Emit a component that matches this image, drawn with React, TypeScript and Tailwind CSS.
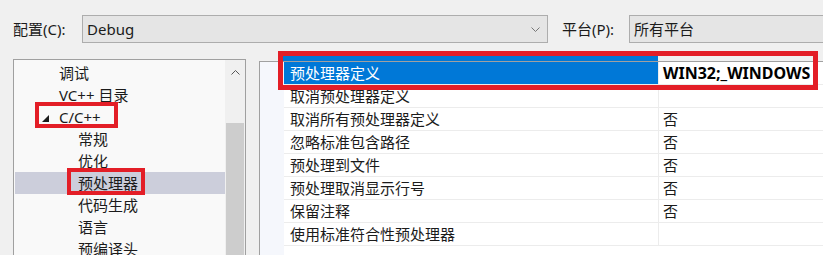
import React from "react";

const treeItems = [
  { label: "调试", level: 1 },
  { label: "VC++ 目录", level: 1 },
  { label: "C/C++", level: 1, expanded: true },
  { label: "常规", level: 2 },
  { label: "优化", level: 2 },
  { label: "预处理器", level: 2, selected: true },
  { label: "代码生成", level: 2 },
  { label: "语言", level: 2 },
  { label: "预编译头", level: 2 },
];

const props = [
  { name: "预处理器定义", value: "WIN32;_WINDOWS", selected: true },
  { name: "取消预处理器定义", value: "" },
  { name: "取消所有预处理器定义", value: "否" },
  { name: "忽略标准包含路径", value: "否" },
  { name: "预处理到文件", value: "否" },
  { name: "预处理取消显示行号", value: "否" },
  { name: "保留注释", value: "否" },
  { name: "使用标准符合性预处理器", value: "" },
];

function Chevron({ up }: { up?: boolean }) {
  return (
    <svg width="9" height="5" viewBox="0 0 9 5" className="block">
      <path
        d={up ? "M0.5 4.5 L4.5 0.5 L8.5 4.5" : "M0.5 0.5 L4.5 4.5 L8.5 0.5"}
        fill="none"
        stroke={up ? "#555" : "#777"}
        strokeWidth="1"
      />
    </svg>
  );
}

export default function App() {
  return (
    <div className="relative w-[823px] h-[255px] overflow-hidden bg-[#f0f0f0] text-[15px] text-[#1b1b1b] font-['Noto_Sans','Noto_Sans_CJK_SC',sans-serif]">
      {/* config / platform bar */}
      <div className="flex items-center pt-[15px]">
        <span className="ml-[13px] w-[69px] leading-[28px]">配置(C):</span>
        <div className="flex items-center w-[466px] h-[28px] border border-[#adadad] bg-[#e5e5e5] pl-[4px] pr-[7px]">
          <span className="flex-1 leading-[26px]">Debug</span>
          <Chevron />
        </div>
        <span className="ml-[14px] w-[67px] leading-[28px]">平台(P):</span>
        <div className="flex items-center flex-1 h-[28px] border border-r-0 border-[#adadad] bg-[#e5e5e5] pl-[4px]">
          <span className="leading-[26px]">所有平台</span>
        </div>
      </div>

      <div className="flex mt-[16px]">
        {/* tree */}
        <div className="ml-[13px] w-[233px] h-[200px] flex border border-[#a0a0a0] border-b-0 bg-[#f9f9f9]">
          <div className="flex-1 pt-[2px] pl-[1px]">
            {treeItems.map((it) => (
              <div
                key={it.label}
                className={
                  "relative h-[22px] leading-[22px] whitespace-nowrap " +
                  (it.selected ? "bg-[#cccedb] " : "") +
                  (it.level === 1 ? "pl-[44px]" : "pl-[63px]")
                }
              >
                {it.expanded && (
                  <svg width="7" height="7" viewBox="0 0 7 7" className="absolute left-[27px] top-[9px]">
                    <polygon points="7,0 7,7 0,7" fill="#1b1b1b" />
                  </svg>
                )}
                {it.label}
              </div>
            ))}
          </div>
          <div className="w-[20px] flex flex-col bg-[#f0f0f0]">
            <div className="h-[63px] flex justify-center pt-[10px]">
              <Chevron up />
            </div>
            <div className="flex-1 mx-[1px] bg-[#cdcdcd]" />
          </div>
        </div>

        {/* property grid */}
        <div className="ml-[13px] mt-[2px] flex-1 h-[200px] flex border-l border-t border-[#a0a0a0] bg-white">
          <div className="w-[24px] bg-[#f5f7fc]" />
          <div className="flex-1">
            {props.map((p) => (
              <div key={p.name} className="flex h-[23px] border-b border-[#ececec]">
                <div
                  className={
                    "w-[375px] pl-[6px] leading-[22px] whitespace-nowrap border-r border-[#ececec] " +
                    (p.selected ? "bg-[#0078d7] text-white" : "")
                  }
                >
                  {p.name}
                </div>
                <div
                  className={
                    "flex-1 pl-[4px] leading-[22px] whitespace-nowrap " +
                    (p.selected ? "font-bold text-black text-[16px]" : "")
                  }
                >
                  {p.value}
                </div>
              </div>
            ))}
          </div>
        </div>
      </div>

      {/* red annotation boxes */}
      <div className="absolute left-[278px] top-[51px] w-[540px] h-[39px] border-[5px] border-[#e31e27]">
        <div className="w-[375px] h-[5px] bg-[#0078d7]" />
      </div>
      <div className="absolute left-[35px] top-[102px] w-[83px] h-[26px] border-[4px] border-[#e31e27]" />
      <div className="absolute left-[67px] top-[168px] w-[78px] h-[27px] border-[4px] border-[#e31e27]" />
    </div>
  );
}
